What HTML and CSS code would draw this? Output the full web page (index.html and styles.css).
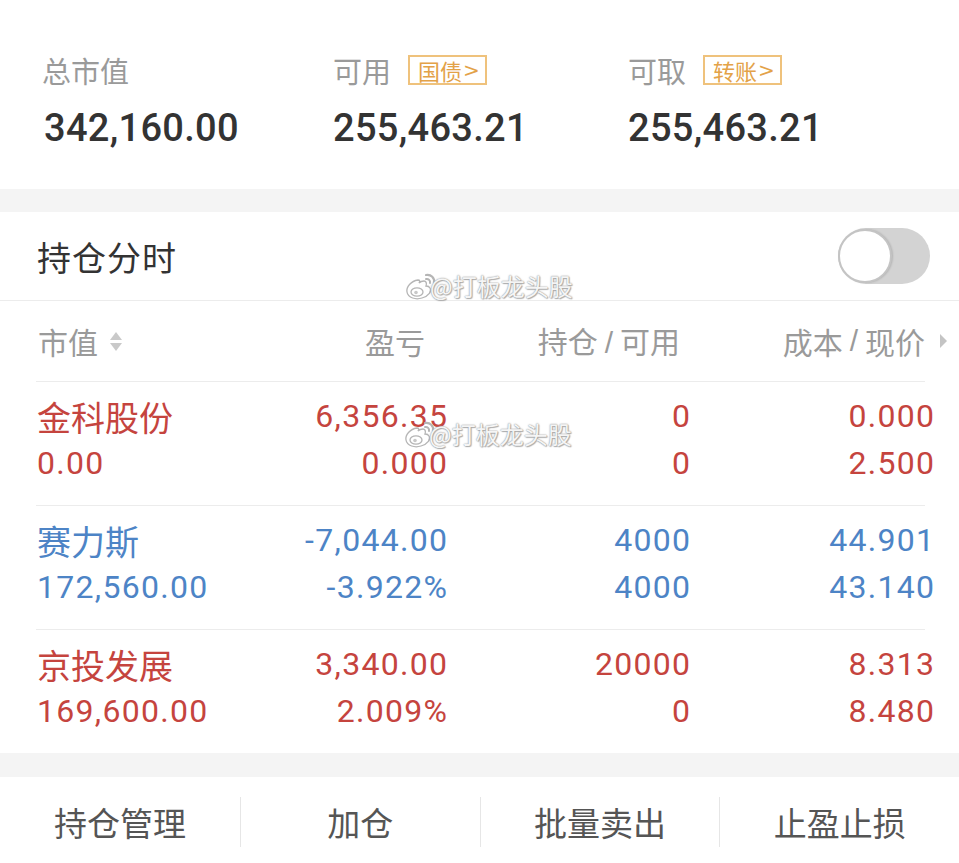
FILE: index.html
```html
<!DOCTYPE html>
<html lang="zh">
<head>
<meta charset="utf-8">
<title>持仓</title>
<link rel="stylesheet" href="styles.css">
</head>
<body>
<div class="page">
  <section class="summary">
    <div class="sum-col">
      <div class="sum-label">总市值</div>
      <div class="sum-value">342,160.00</div>
    </div>
    <div class="sum-col">
      <div class="sum-label">可用<span class="badge">国债<span class="chev">&gt;</span></span></div>
      <div class="sum-value">255,463.21</div>
    </div>
    <div class="sum-col">
      <div class="sum-label">可取<span class="badge">转账<span class="chev">&gt;</span></span></div>
      <div class="sum-value">255,463.21</div>
    </div>
  </section>

  <div class="band"></div>

  <section class="pos-head">
    <div class="pos-title">持仓分时</div>
    <div class="toggle"><span class="knob"></span></div>
  </section>

  <section class="table">
    <div class="thead">
      <div class="th th-name">市值<span class="sort"><span class="up"></span><span class="down"></span></span></div>
      <div class="th th-pl">盈亏</div>
      <div class="th th-qty">持仓<span class="slash">/</span>可用</div>
      <div class="th th-cost">成本<span class="slash">/</span>现价<span class="more"></span></div>
    </div>

    <div class="trow red">
      <div class="td td-name"><div>金科股份</div><div class="num">0.00</div></div>
      <div class="td td-r num"><div>6,356.35</div><div>0.000</div></div>
      <div class="td td-r num"><div>0</div><div>0</div></div>
      <div class="td td-r td-last num"><div>0.000</div><div>2.500</div></div>
    </div>

    <div class="trow blue">
      <div class="td td-name"><div>赛力斯</div><div class="num">172,560.00</div></div>
      <div class="td td-r num"><div>-7,044.00</div><div>-3.922%</div></div>
      <div class="td td-r num"><div>4000</div><div>4000</div></div>
      <div class="td td-r td-last num"><div>44.901</div><div>43.140</div></div>
    </div>

    <div class="trow red last">
      <div class="td td-name"><div>京投发展</div><div class="num">169,600.00</div></div>
      <div class="td td-r num"><div>3,340.00</div><div>2.009%</div></div>
      <div class="td td-r num"><div>20000</div><div>0</div></div>
      <div class="td td-r td-last num"><div>8.313</div><div>8.480</div></div>
    </div>
  </section>

  <div class="band band-b"></div>

  <nav class="actions">
    <div class="act">持仓管理</div>
    <div class="act">加仓</div>
    <div class="act">批量卖出</div>
    <div class="act">止盈止损</div>
  </nav>

  <div class="wm wm1">
    <svg class="wm-logo" viewBox="0 0 34 30" width="34" height="30">
      <path d="M14 9 C7 10 2 16 3 21 C4 27 12 29 18 27 C25 25 28 20 26 17 C25 15 23 15 22 15 C23 12 22 10 20 10 C18 10 16 11 15 12 C16 10 16 9 14 9 Z" fill="#fff" stroke="#b5b5b5" stroke-width="1.3"/>
      <ellipse cx="13" cy="21" rx="6" ry="4.2" fill="#fff" stroke="#b5b5b5" stroke-width="1.3"/>
      <circle cx="12" cy="21.5" r="1.8" fill="#c8c8c8"/>
      <path d="M22 4 C27 3 31 7 30 12" fill="none" stroke="#b5b5b5" stroke-width="2.2" stroke-linecap="round"/>
      <path d="M22 8 C24.5 7.5 26.5 9.5 26 12" fill="none" stroke="#b5b5b5" stroke-width="2" stroke-linecap="round"/>
    </svg>
    <span class="wm-text">@打板龙头股</span>
  </div>
  <div class="wm wm2">
    <svg class="wm-logo" viewBox="0 0 34 30" width="34" height="30">
      <path d="M14 9 C7 10 2 16 3 21 C4 27 12 29 18 27 C25 25 28 20 26 17 C25 15 23 15 22 15 C23 12 22 10 20 10 C18 10 16 11 15 12 C16 10 16 9 14 9 Z" fill="#fff" stroke="#b5b5b5" stroke-width="1.3"/>
      <ellipse cx="13" cy="21" rx="6" ry="4.2" fill="#fff" stroke="#b5b5b5" stroke-width="1.3"/>
      <circle cx="12" cy="21.5" r="1.8" fill="#c8c8c8"/>
      <path d="M22 4 C27 3 31 7 30 12" fill="none" stroke="#b5b5b5" stroke-width="2.2" stroke-linecap="round"/>
      <path d="M22 8 C24.5 7.5 26.5 9.5 26 12" fill="none" stroke="#b5b5b5" stroke-width="2" stroke-linecap="round"/>
    </svg>
    <span class="wm-text">@打板龙头股</span>
  </div>
</div>
</body>
</html>
```

FILE: styles.css
```css
* { box-sizing: border-box; }
html, body { margin: 0; padding: 0; background: #fff; }
body {
  font-family: "Noto Sans CJK SC", "Noto Sans", sans-serif;
  color: #333;
}
.page {
  position: relative;
  width: 959px;
  height: 863px;
  overflow: hidden;
}

/* summary */
.summary {
  display: grid;
  grid-template-columns: 291px 295px 1fr;
  padding: 55px 0 41px 42px;
  height: 189px;
}
.sum-label {
  display: flex;
  align-items: center;
  height: 30px;
  font-size: 29px;
  color: #9a9a9a;
  line-height: 30px;
}
.badge {
  display: inline-flex;
  align-items: center;
  height: 30px;
  margin-left: 17px;
  padding: 0 5px 0 8px;
  border: 2px solid #efc27c;
  color: #e3a248;
  font-size: 22px;
  line-height: 26px;
}
.chev {
  font-family: "DejaVu Sans", sans-serif;
  font-size: 20px;
  margin-left: 1px;
}
.sum-value {
  margin-top: 23px;
  font-family: Roboto, "Noto Sans", sans-serif;
  font-weight: 500;
  font-size: 38px;
  letter-spacing: 0.3px;
  line-height: 40px;
  color: #333;
  padding-left: 2px;
}
.summary .sum-col:not(:first-child) .sum-value { padding-left: 0; }

.band {
  height: 23px;
  background: #f4f4f4;
}
.band-b { height: 24px; }

/* position header */
.pos-head {
  display: flex;
  align-items: center;
  justify-content: space-between;
  height: 89px;
  padding: 0 29px 0 37px;
  border-bottom: 1px solid #ececec;
}
.pos-title {
  font-size: 34px;
  color: #333;
  letter-spacing: 1px;
}
.toggle {
  position: relative;
  width: 92px;
  height: 56px;
  border-radius: 28px;
  background: #d3d3d3;
}
.knob {
  position: absolute;
  left: 0;
  top: 1px;
  width: 54px;
  height: 54px;
  border-radius: 50%;
  background: #fff;
  border: 2px solid #c4c4c4;
  box-shadow: 1px 0 2px rgba(0,0,0,0.15);
}

/* table */
.thead, .trow {
  display: grid;
  grid-template-columns: 202px 209px 243px 235px;
  margin: 0 34px 0 36px;
  border-bottom: 1px solid #ececec;
}
.thead {
  height: 81px;
  align-items: center;
}
.th {
  font-size: 30px;
  color: #9a9a9a;
  line-height: 36px;
}
.th-name {
  display: flex;
  align-items: center;
  padding-left: 2px;
}
.sort {
  display: inline-flex;
  flex-direction: column;
  gap: 3px;
  margin-left: 12px;
}
.sort .up, .sort .down {
  width: 0; height: 0;
  border-left: 6px solid transparent;
  border-right: 6px solid transparent;
}
.sort .up { border-bottom: 8px solid #c9c9c9; }
.sort .down { border-top: 8px solid #c9c9c9; }
.th-pl { text-align: right; padding-right: 22px; }
.th-qty { text-align: right; padding-right: 10px; }
.th-cost {
  display: flex;
  align-items: center;
  justify-content: flex-end;
  margin-right: -22px;
}
.slash { margin: 0 7px; font-family: "Liberation Sans", sans-serif; }
.more {
  width: 0; height: 0;
  margin-left: 15px;
  border-top: 7px solid transparent;
  border-bottom: 7px solid transparent;
  border-left: 7px solid #c4c4c4;
}

.trow {
  height: 124px;
  padding: 11px 0 18px;
  font-size: 32px;
  line-height: 47px;
}
.trow.last { border-bottom: none; height: 123px; }
.trow.red { color: #c5443e; }
.trow.blue { color: #4d84c6; }
.td-name { padding-left: 1px; font-size: 34px; }
.td-name .num { font-size: 32px; }
.num {
  font-family: Roboto, "Noto Sans", sans-serif;
  letter-spacing: 1.3px;
}
.td-r { text-align: right; }
.td-r > div { margin-right: -1.3px; }
.td-last { margin-right: -9px; }

/* actions */
.actions {
  display: grid;
  grid-template-columns: repeat(4, 1fr);
  align-items: center;
  height: 85px;
  padding-top: 5px;
}
.act {
  text-align: center;
  font-size: 33px;
  color: #555;
  line-height: 50px;
  border-left: 1px solid #e6e6e6;
}
.act:first-child { border-left: none; }

/* watermark overlays */
.wm {
  position: absolute;
  display: flex;
  align-items: center;
  pointer-events: none;
}
.wm1 { left: 404px; top: 268px; }
.wm2 { left: 403px; top: 416px; }
.wm-logo { display: block; }
.wm-text {
  margin-left: -8px;
  font-size: 24px;
  color: rgba(255,255,255,0.92);
  text-shadow: 0 0 1px #9a9a9a, 0 0 2px #a8a8a8, 1px 1px 1px #b0b0b0;
}
```
